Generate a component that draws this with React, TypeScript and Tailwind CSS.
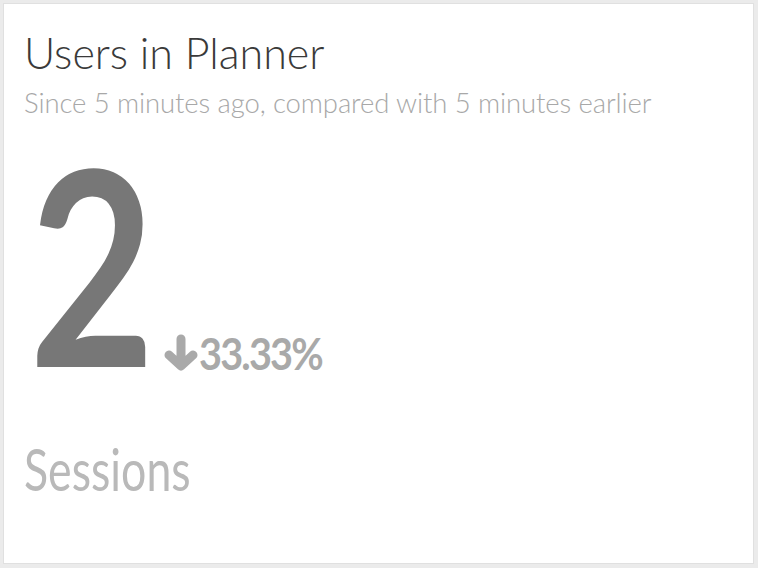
export default function App() {
  return (
    <div className="min-h-screen bg-[#ebebeb] pt-[3px] pl-[3px] pr-[4px] pb-[4px]">
      <div
        className="h-[561px] bg-white border border-[#e0e0e0] px-[20px] pt-[23px]"
        style={{ fontFamily: "Lato, 'Open Sans', sans-serif" }}
      >
        <h1 className="text-[43px] leading-[1.2] font-light text-[#3a3a3a]">
          Users in Planner
        </h1>
        <p className="mt-[7px] text-[27.5px] leading-[1.2] font-light tracking-[-0.1px] text-[#a8a8a8]">
          Since 5 minutes ago, compared with 5 minutes earlier
        </p>
        <div className="flex items-end mt-[35px]">
          <div className="w-[126px] shrink-0 pl-[5px]">
            <div className="text-[272px] leading-[0.8] font-bold text-[#777777] scale-x-[0.8] origin-left">
              2
            </div>
          </div>
          <div className="flex items-center ml-[14px] mb-[-4px] text-[#a9a9a9]">
            <svg width="34" height="38" viewBox="0 0 34 38" fill="none">
              <path
                d="M17 5 V31 M5 21 L17 32 L29 21"
                stroke="currentColor"
                strokeWidth="9"
                strokeLinecap="round"
                strokeLinejoin="round"
              />
            </svg>
            <span className="ml-[1px] text-[44px] leading-none font-bold tracking-[-2px] scale-x-[0.9] origin-left">
              33.33%
            </span>
          </div>
        </div>
        <div className="mt-[69px] text-[58px] leading-none text-[#b9b9b9] scale-x-[0.77] origin-left">
          Sessions
        </div>
      </div>
    </div>
  );
}
